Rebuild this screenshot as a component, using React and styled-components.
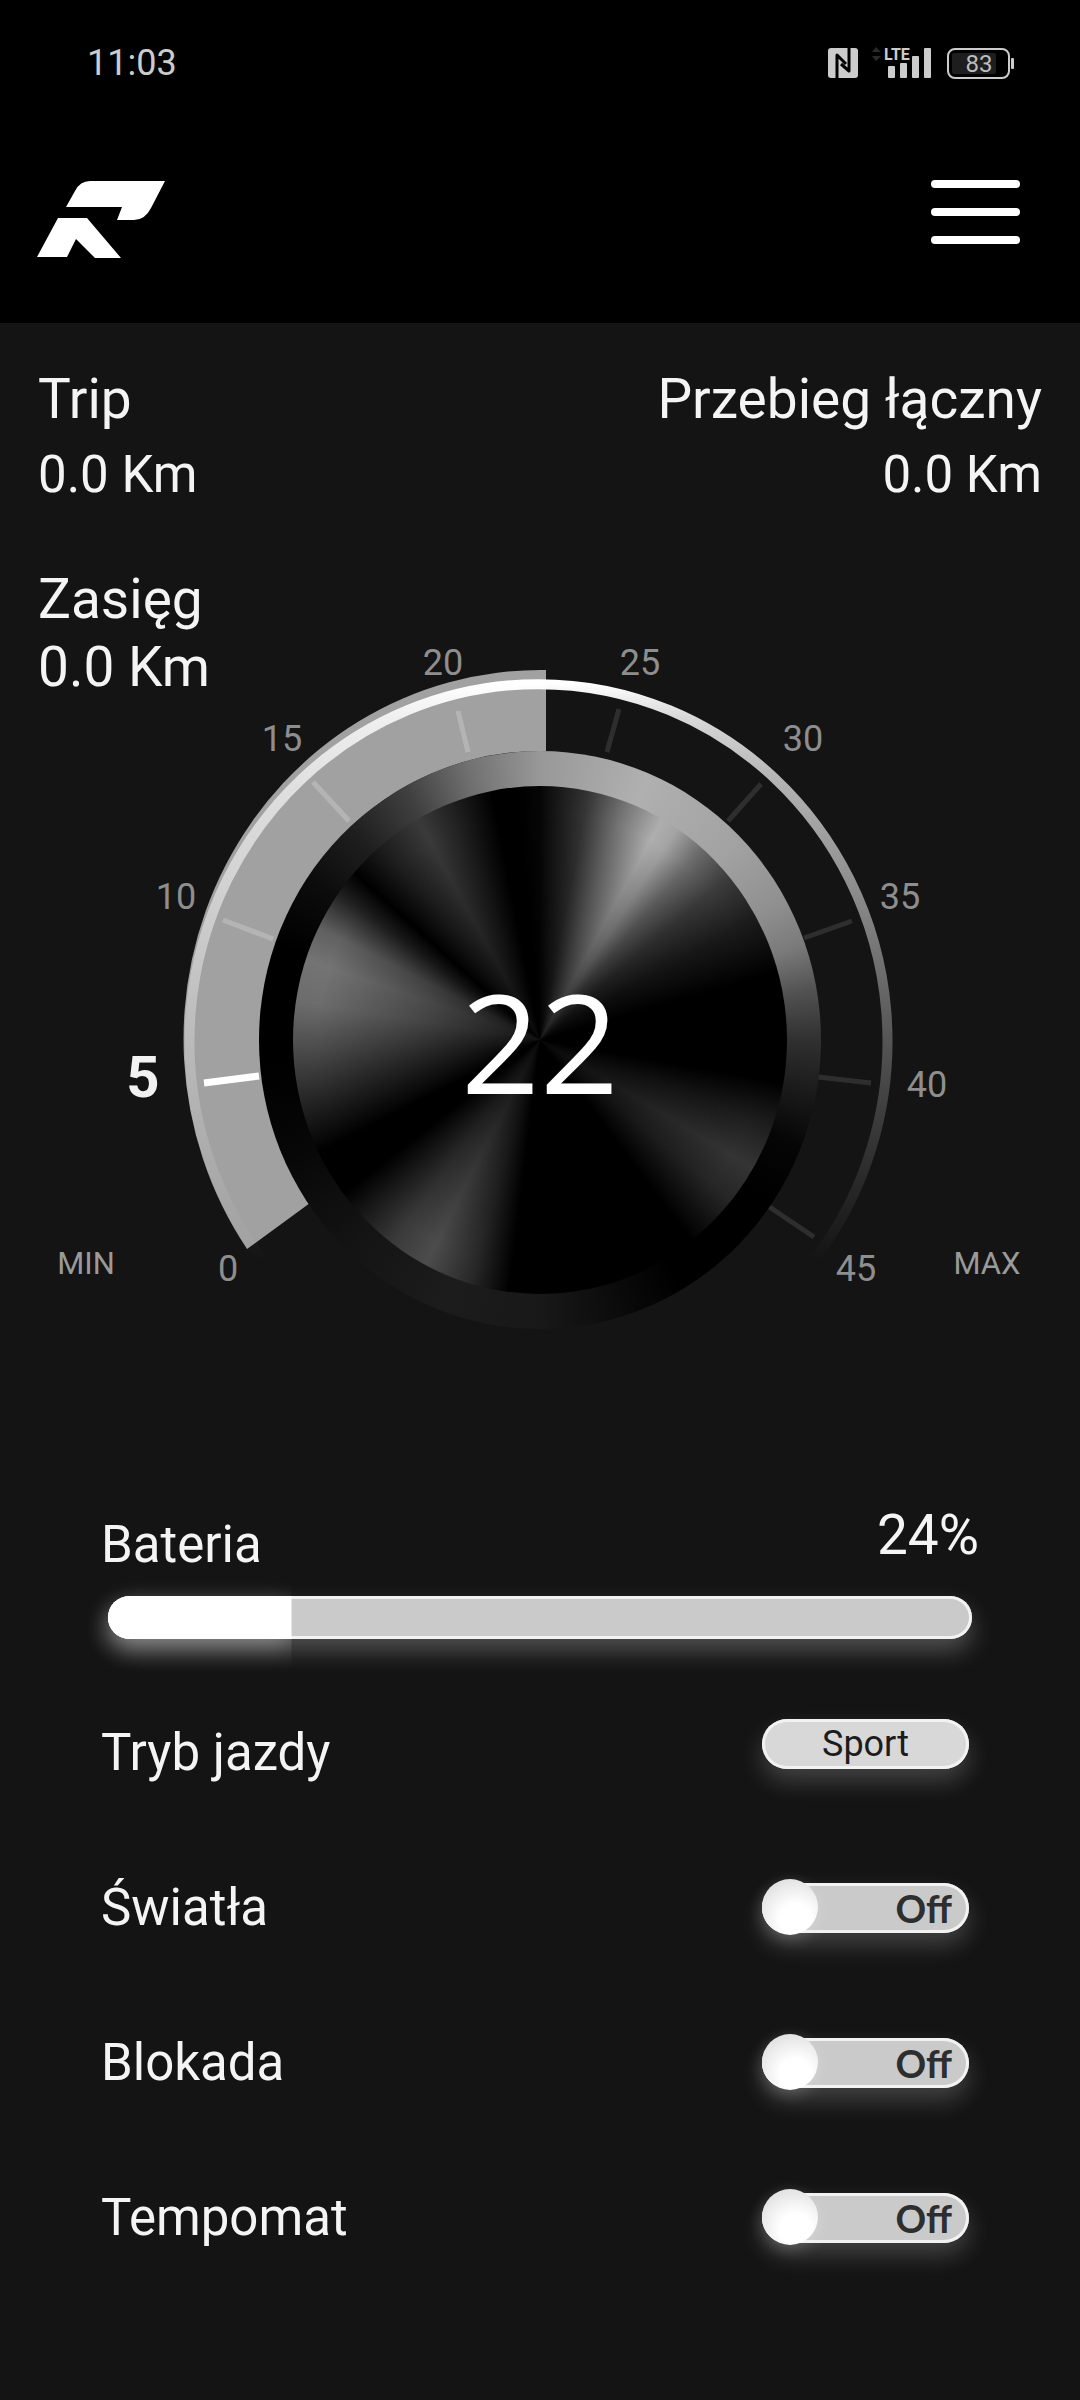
import React, { useState } from 'react';
import styled, { createGlobalStyle } from 'styled-components';

const GlobalStyle = createGlobalStyle`
  * {
    box-sizing: border-box;
  }
  body {
    margin: 0;
    background-color: #141414;
    color: #f4f4f4;
    font-family: Roboto, sans-serif;
  }
  button {
    border: 0;
    padding: 0;
    background: none;
    font-family: inherit;
    cursor: pointer;
  }
`;

const Header = styled.header`
  background-color: black;
`;

const StatusBar = styled.div`
  display: flex;
  justify-content: space-between;
  align-items: center;
  padding: 42px 66px 0 87px;
  color: #cccccc;
  font-size: 36px;
  line-height: 42px;
`;

const StatusIcons = styled.div`
  display: flex;
  align-items: center;
  gap: 14px;
  & svg {
    display: block;
  }
`;

const TopBar = styled.div`
  display: flex;
  justify-content: space-between;
  align-items: flex-start;
  padding: 96px 60px 65px 37px;
`;

const LogoLink = styled.a`
  display: block;
  & svg {
    display: block;
  }
`;

const MenuButton = styled.button`
  display: flex;
  flex-flow: column;
  gap: 20px;
  width: 89px;
  & span {
    height: 8px;
    border-radius: 4px;
    background-color: white;
  }
`;

const Stats = styled.section`
  display: flex;
  justify-content: space-between;
  padding: 42px 38px 0;
`;

const Stat = styled.div`
  display: flex;
  flex-flow: column;
  gap: ${props => (props.$tight ? '0' : '12px')};
  text-align: ${props => props.$align || 'left'};
`;

const StatName = styled.span`
  font-size: 55px;
  line-height: 68px;
`;

const StatValue = styled.span`
  font-size: ${props => (props.$large ? '55px' : '51px')};
  line-height: ${props => (props.$large ? '68px' : '60px')};
`;

// range readout and dial share one cell, the dial is drawn under the text
const DialArea = styled.section`
  display: grid;
  padding-top: 60px;
  & > * {
    grid-area: 1 / 1;
  }
`;

const RangeBox = styled.div`
  justify-self: start;
  padding-left: 38px;
`;

const Dial = styled.div`
  display: grid;
  place-items: center;
  margin-top: 16px;
  & > * {
    grid-area: 1 / 1;
  }
`;

const DialScale = styled.svg`
  display: block;
  width: 100%;
`;

const Bezel = styled.div`
  display: grid;
  place-items: center;
  width: 52%;
  aspect-ratio: 35 / 36;
  border-radius: 50%;
  background: conic-gradient(
    #989898 0deg, #b0b0b0 22deg, #a2a2a2 45deg, #909090 60deg, #7a7a7a 70deg,
    #505050 80deg, #303030 90deg, #1c1c1c 100deg, #060606 112deg, #000 125deg,
    #000 150deg, #0c0c0c 165deg, #181818 180deg, #1c1c1c 200deg, #141414 222deg,
    #070707 245deg, #000 265deg, #000 290deg, #0c0c0c 305deg, #1e1e1e 318deg,
    #404040 332deg, #707070 345deg, #989898 360deg
  );
`;

const Disc = styled.div`
  display: grid;
  place-items: center;
  width: 88%;
  height: 88%;
  border-radius: 50%;
  color: white;
  font-family: "Open Sans", "Noto Sans", sans-serif;
  font-weight: 500;
  font-size: 138px;
  line-height: 1;
  background:
    radial-gradient(closest-side, rgba(0, 0, 0, 0.85), rgba(0, 0, 0, 0.35) 50%, rgba(0, 0, 0, 0) 90%),
    conic-gradient(
      #060606 0deg, #343434 11deg, #747474 20deg, #aeaeae 29deg, #a4a4a4 33deg,
      #6c6c6c 40deg, #3c3c3c 49deg, #1c1c1c 60deg, #000 74deg, #000 100deg,
      #1c1c1c 110deg, #343434 121deg, #262626 130deg, #000 143deg, #000 187deg,
      #282828 196deg, #4c4c4c 207deg, #3a3a3a 216deg, #000 232deg, #000 243deg,
      #2a2a2a 257deg, #4c4c4c 268deg, #6c6c6c 279deg, #747474 289deg, #606060 297deg,
      #202020 306deg, #000 312deg, #1e1e1e 321deg, #3a3a3a 331deg, #1e1e1e 340deg,
      #000 349deg, #000 355deg, #060606 360deg
    );
`;

const Panel = styled.section`
  display: flex;
  flex-flow: column;
  padding: 6px 101px 120px;
`;

const BatteryHead = styled.div`
  display: flex;
  justify-content: space-between;
  align-items: flex-start;
  min-height: 70px;
`;

const Label = styled.label`
  align-self: ${props => (props.$low ? 'flex-end' : 'center')};
  font-size: 51px;
  line-height: 60px;
`;

const Percent = styled.span`
  font-size: 55px;
  line-height: 60px;
`;

const BatteryBar = styled.div`
  height: 43px;
  margin: 21px 7px 80px;
  border-radius: 22px;
  background-color: #cacaca;
  box-shadow: inset 0 0 0 3px #f2f2f2, 0 12px 24px rgba(255, 255, 255, 0.26);
`;

// the glow is cut off at the right end of the charge
const BatteryFill = styled.div`
  height: 100%;
  border-radius: 22px 0 0 22px;
  background-color: white;
  box-shadow: 0 8px 24px rgba(255, 255, 255, 0.35);
  clip-path: inset(-60px 0 -60px -60px);
`;

const Settings = styled.div`
  display: flex;
  flex-flow: column;
  gap: 95px;
`;

const Row = styled.div`
  display: flex;
  justify-content: space-between;
  align-items: ${props => (props.$low ? 'flex-start' : 'center')};
  min-height: ${props => (props.$low ? '64px' : '60px')};
  padding-right: 10px;
`;

const ModeButton = styled.button`
  width: 207px;
  height: 50px;
  border-radius: 25px;
  background-color: #d8d8d8;
  box-shadow: inset 0 0 0 3px #f2f2f2, 0 12px 24px rgba(255, 255, 255, 0.2);
  color: #1c1c1c;
  font-size: 36px;
  line-height: 48px;
`;

const Switch = styled.span`
  position: relative;
  display: flex;
  align-items: center;
  justify-content: ${props => (props.$on ? 'flex-start' : 'flex-end')};
  width: 207px;
  height: 50px;
  padding: 0 17px;
  border-radius: 25px;
  background-color: #cacaca;
  box-shadow: inset 0 0 0 3px #f2f2f2, 0 12px 24px rgba(255, 255, 255, 0.2);
  color: #2e2e2e;
  font-family: Lato, sans-serif;
  font-weight: 700;
  font-size: 38px;
  line-height: 50px;
  & input {
    position: absolute;
    inset: 0;
    width: 100%;
    height: 100%;
    margin: 0;
    opacity: 0;
    cursor: pointer;
  }
`;

const Knob = styled.span`
  position: absolute;
  top: -4px;
  left: ${props => (props.$on ? '151px' : '0')};
  width: 56px;
  height: 56px;
  border-radius: 50%;
  background: radial-gradient(circle at 60% 72%, #ffffff 30%, #d8d8d8 95%);
  box-shadow: 0 4px 16px rgba(255, 255, 255, 0.2);
  pointer-events: none;
`;

const ticks = [
  [204, 1085, 259, 1077],
  [223, 921, 273, 940],
  [313, 783, 349, 822],
  [458, 712, 468, 753],
  [619, 710, 607, 753],
  [761, 785, 728, 822],
  [852, 922, 804, 939],
  [871, 1084, 818, 1078],
  [814, 1238, 768, 1207],
];

const marks = [
  { text: '0', x: 228, y: 1282 },
  { text: '10', x: 176, y: 910 },
  { text: '15', x: 282, y: 752 },
  { text: '20', x: 443, y: 676 },
  { text: '25', x: 640, y: 676 },
  { text: '30', x: 803, y: 752 },
  { text: '35', x: 900, y: 910 },
  { text: '40', x: 927, y: 1098 },
  { text: '45', x: 856, y: 1282 },
];

const NfcIcon = () => (
  <svg width="30" height="30" viewBox="0 0 30 30" aria-label="NFC">
    <rect width="30" height="30" rx="3" fill="#cccccc" />
    <path
      d="M9 30V7L18 16M21 0V23L13 16"
      fill="none"
      stroke="#000"
      strokeWidth="3"
      strokeLinejoin="round"
    />
  </svg>
);

const SignalIcon = () => (
  <svg width="60" height="40" viewBox="872 42 60 40" aria-label="LTE">
    <path d="M872 51L876 46L881 51ZM872 55H881L876 60Z" fill="#2a2a2a" />
    <text x="884" y="59" fontSize="16" fontWeight="700" fill="#cccccc">LTE</text>
    <g fill="#cccccc">
      <rect x="888" y="65" width="7" height="12" rx="1" />
      <rect x="900" y="62" width="7" height="15" rx="1" />
      <rect x="912" y="55" width="7" height="22" rx="1" />
      <rect x="924" y="47" width="7" height="30" rx="1" />
    </g>
  </svg>
);

const PhoneBattery = () => (
  <svg width="68" height="32" viewBox="946 46 68 32" aria-label="83">
    <rect x="948" y="48" width="61" height="29" rx="7" fill="none" stroke="#cccccc" strokeWidth="2" />
    <rect x="952" y="52" width="44" height="21" rx="2" fill="#1e1e1e" />
    <rect x="1011" y="57" width="3" height="11" rx="1" fill="#cccccc" />
    <text x="979" y="71" textAnchor="middle" fontSize="24" fill="#bdbdbd">83</text>
  </svg>
);

const Logo = () => (
  <svg width="128" height="78" viewBox="37 180 128 78">
    <path
      d="M66 207L75 191Q80 181 90 181H165L151 208Q145 220 134 220H117L122 207Z"
      fill="#fff"
    />
    <path d="M37 257L58 218H87L121 258H95L76 239L67 257Z" fill="#fff" />
  </svg>
);

const Gauge = ({ speed }) => (
  <Dial>
    <DialScale viewBox="0 582 1080 918">
      <defs>
        <linearGradient id="ring" gradientUnits="userSpaceOnUse" x1="0" y1="684" x2="0" y2="1262">
          <stop offset="0" stopColor="#ffffff" />
          <stop offset="0.06" stopColor="#d8d8d8" />
          <stop offset="0.18" stopColor="#b0b0b0" />
          <stop offset="0.36" stopColor="#8c8c8c" />
          <stop offset="0.56" stopColor="#606060" />
          <stop offset="0.72" stopColor="#424242" />
          <stop offset="0.88" stopColor="#262626" />
          <stop offset="1" stopColor="#141414" />
        </linearGradient>
      </defs>
      <path
        d="M262 1260A349 357 0 1 1 815 1260"
        fill="none"
        stroke="url(#ring)"
        strokeWidth="10"
      />
      {ticks.map(([x1, y1, x2, y2]) => (
        <line key={x1} x1={x1} y1={y1} x2={x2} y2={y2} stroke="#2e2e2e" strokeWidth="5" />
      ))}
      {/* travelled part of the scale */}
      <path
        d="M247 1250A357 369 0 0 1 546 671V752A280 288 0 0 0 310 1204Z"
        fill="#ffffff"
        fillOpacity="0.6"
      />
      {ticks.slice(1, 4).map(([x1, y1, x2, y2]) => (
        <line key={x1} x1={x1} y1={y1} x2={x2} y2={y2} stroke="#b4b4b4" strokeWidth="5" />
      ))}
      <line x1="204" y1="1084" x2="259" y2="1077" stroke="#ffffff" strokeWidth="7" />
      <g fontSize="36" fill="#8e8e8e" textAnchor="middle">
        {marks.map(mark => (
          <text key={mark.text} x={mark.x} y={mark.y}>{mark.text}</text>
        ))}
      </g>
      <text x="143" y="1098" fontSize="58" fontWeight="700" fill="#f2f2f2" textAnchor="middle">5</text>
      <g fontSize="31" fill="#9a9a9a" textAnchor="middle">
        <text x="86" y="1275">MIN</text>
        <text x="987" y="1275">MAX</text>
      </g>
    </DialScale>
    <Bezel>
      <Disc>{speed}</Disc>
    </Bezel>
  </Dial>
);

const Toggle = ({ id, label }) => {
  const [on, setOn] = useState(false);
  return (
    <Row>
      <Label htmlFor={id}>{label}</Label>
      <Switch $on={on}>
        {on ? 'On' : 'Off'}
        <Knob $on={on} />
        <input
          id={id}
          type="checkbox"
          checked={on}
          onChange={e => setOn(e.target.checked)}
        />
      </Switch>
    </Row>
  );
};

const App = () => {
  const charge = 24;
  const fill = charge * 0.885;

  return (
    <>
      <GlobalStyle />
      <Header>
        <StatusBar>
          <span>11:03</span>
          <StatusIcons>
            <NfcIcon />
            <SignalIcon />
            <PhoneBattery />
          </StatusIcons>
        </StatusBar>
        <TopBar>
          <LogoLink href="#" aria-label="Start">
            <Logo />
          </LogoLink>
          <MenuButton type="button" aria-label="Menu">
            <span />
            <span />
            <span />
          </MenuButton>
        </TopBar>
      </Header>
      <main>
        <Stats>
          <Stat>
            <StatName>Trip</StatName>
            <StatValue>0.0 Km</StatValue>
          </Stat>
          <Stat $align="right">
            <StatName>Przebieg łączny</StatName>
            <StatValue>0.0 Km</StatValue>
          </Stat>
        </Stats>
        <DialArea>
          <Gauge speed={22} />
          <RangeBox>
            <Stat $tight>
              <StatName>Zasięg</StatName>
              <StatValue $large>0.0 Km</StatValue>
            </Stat>
          </RangeBox>
        </DialArea>
        <Panel>
          <BatteryHead>
            <Label as="span" id="battery" $low>Bateria</Label>
            <Percent>{charge}%</Percent>
          </BatteryHead>
          <BatteryBar
            role="progressbar"
            aria-labelledby="battery"
            aria-valuenow={charge}
            aria-valuemin={0}
            aria-valuemax={100}
          >
            <BatteryFill style={{ width: `${fill}%` }} />
          </BatteryBar>
          <Settings>
            <Row $low>
              <Label htmlFor="mode" $low>Tryb jazdy</Label>
              <ModeButton id="mode" type="button">Sport</ModeButton>
            </Row>
            <Toggle id="lights" label="Światła" />
            <Toggle id="lock" label="Blokada" />
            <Toggle id="cruise" label="Tempomat" />
          </Settings>
        </Panel>
      </main>
    </>
  );
};

export default App;
